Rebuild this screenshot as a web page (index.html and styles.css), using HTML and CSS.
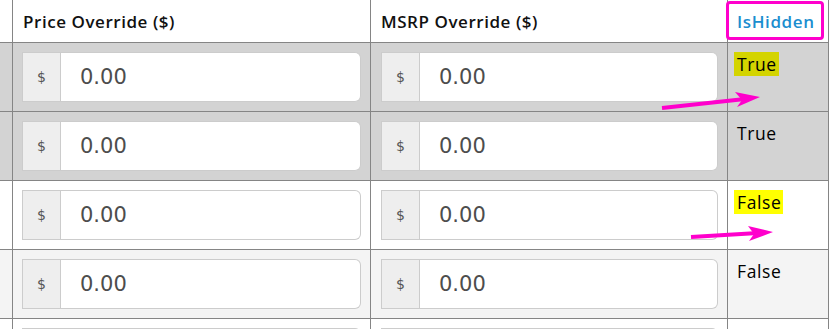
FILE: index.html
```html
<!DOCTYPE html>
<html>
<head>
<meta charset="utf-8">
<link rel="stylesheet" href="styles.css">
</head>
<body>
<div class="grid">
  <div class="row head">
    <div class="cell c0"></div>
    <div class="cell c1 th">Price Override ($)</div>
    <div class="cell c2 th">MSRP Override ($)</div>
    <div class="cell c3 th link">IsHidden</div>
  </div>
  <div class="row gray">
    <div class="cell c0"></div>
    <div class="cell c1"><div class="ig"><span class="addon">$</span><span class="inp">0.00</span></div></div>
    <div class="cell c2"><div class="ig"><span class="addon">$</span><span class="inp">0.00</span></div></div>
    <div class="cell c3 val"><span class="mark mark-dim">True</span></div>
  </div>
  <div class="row gray">
    <div class="cell c0"></div>
    <div class="cell c1"><div class="ig"><span class="addon">$</span><span class="inp">0.00</span></div></div>
    <div class="cell c2"><div class="ig"><span class="addon">$</span><span class="inp">0.00</span></div></div>
    <div class="cell c3 val"><span class="plain">True</span></div>
  </div>
  <div class="row white">
    <div class="cell c0"></div>
    <div class="cell c1"><div class="ig"><span class="addon">$</span><span class="inp">0.00</span></div></div>
    <div class="cell c2"><div class="ig"><span class="addon">$</span><span class="inp">0.00</span></div></div>
    <div class="cell c3 val"><span class="mark mark-bright">False</span></div>
  </div>
  <div class="row light">
    <div class="cell c0"></div>
    <div class="cell c1"><div class="ig"><span class="addon">$</span><span class="inp">0.00</span></div></div>
    <div class="cell c2"><div class="ig"><span class="addon">$</span><span class="inp">0.00</span></div></div>
    <div class="cell c3 val"><span class="plain">False</span></div>
  </div>
  <div class="row white">
    <div class="cell c0"></div>
    <div class="cell c1"><div class="ig"><span class="addon"></span><span class="inp"></span></div></div>
    <div class="cell c2"><div class="ig"><span class="addon"></span><span class="inp"></span></div></div>
    <div class="cell c3 val"></div>
  </div>
</div>
<div class="hl-box"></div>
<svg class="arrows" viewBox="0 0 839 329" width="839" height="329">
  <line x1="662" y1="108" x2="745" y2="99" stroke="#ff00cc" stroke-width="4"/>
  <polygon points="735,92 760,97 737,107 742,100" fill="#ff00cc"/>
  <line x1="691" y1="237" x2="758" y2="233" stroke="#ff00cc" stroke-width="4"/>
  <polygon points="748,226 773,232 749,241 754,234" fill="#ff00cc"/>
</svg>
</body>
</html>
```

FILE: styles.css
```css
html, body {
  margin: 0;
  padding: 0;
  background: #fff;
  overflow: hidden;
}
body {
  width: 839px;
  height: 329px;
  position: relative;
  font-family: "Open Sans", "DejaVu Sans", sans-serif;
  color: #000;
}
.grid {
  width: 829px;
  height: 329px;
  overflow: hidden;
}
.row {
  display: grid;
  grid-template-columns: 13px 358px 357px 101px;
  height: 69px;
  border-bottom: 1px solid #858585;
  box-sizing: border-box;
}
.row.head {
  height: 43px;
  background: #fff;
}
.row.gray { background: #d3d3d3; }
.row.white { background: #fff; }
.row.light { background: #f4f4f4; }
.cell {
  border-right: 1px solid #858585;
  box-sizing: border-box;
}
.c1 { padding: 9px 9px 0 9px; }
.c2 { padding: 9px 9px 0 10px; }
.th {
  display: flex;
  align-items: center;
  padding: 0 10px;
  font-weight: 600;
  font-size: 17px;
  letter-spacing: 0.55px;
  color: #111;
}
.th.link {
  color: #1b8ecf;
  padding-left: 9px;
  letter-spacing: 0.6px;
}
.ig {
  display: flex;
  height: 50px;
  box-sizing: border-box;
}
.addon {
  width: 39px;
  box-sizing: border-box;
  background: #eee;
  border: 1px solid #ccc;
  display: flex;
  align-items: center;
  justify-content: center;
  font-family: "DejaVu Sans", sans-serif;
  font-size: 14px;
  color: #555;
}
.inp {
  flex: 1;
  background: #fff;
  border: 1px solid #ccc;
  border-left: none;
  border-radius: 0 6px 6px 0;
  display: flex;
  align-items: center;
  padding-left: 19px;
  font-family: "DejaVu Sans", sans-serif;
  font-size: 21px;
  color: #4d4d4d;
}
.val {
  padding: 9px 0 0 6px;
  font-size: 17.5px;
  letter-spacing: 0.6px;
  line-height: 24px;
}
.mark {
  display: inline-block;
  padding: 0 2px 0 3px;
}
.mark-dim { background: #d4d400; }
.mark-bright { background: #ffff00; }
.plain { padding-left: 3px; }
.hl-box {
  position: absolute;
  left: 726px;
  top: 1px;
  width: 98px;
  height: 39px;
  box-sizing: border-box;
  border: 3px solid #ff00cc;
  border-radius: 4px;
}
.arrows {
  position: absolute;
  left: 0;
  top: 0;
  pointer-events: none;
}
```
